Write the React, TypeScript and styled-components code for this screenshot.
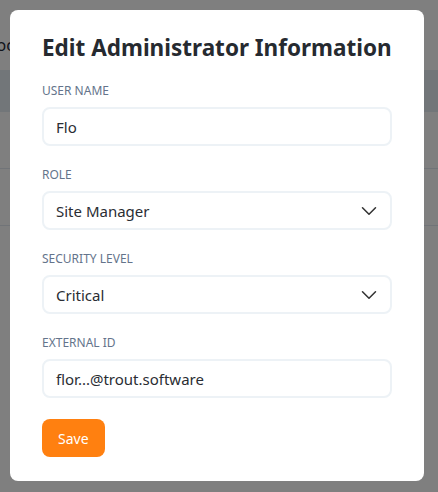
import { ReactElement } from "react";
import styled, { createGlobalStyle } from "styled-components";
import { ChevronDown } from "lucide-react";

const GlobalStyle = createGlobalStyle`
  html, body {
    margin: 0;
    padding: 0;
    background: #ffffff;
    font-family: "Noto Sans", "Open Sans", sans-serif;
  }
  * {
    box-sizing: border-box;
  }
`;

const Page = styled.div`
  position: relative;
  width: 438px;
  height: 492px;
  overflow: hidden;
  background: #ffffff;
`;

const PageTitle = styled.div`
  padding: 34px 0 0 0;
  margin-left: -18px;
  height: 70px;
  font-size: 16px;
  color: #1f2937;
`;

const Band = styled.div`
  height: 42px;
  background: #e5ecf3;
`;

const TableRow = styled.div`
  height: 57px;
  border-bottom: 1px solid #e2e8f0;
`;

const Backdrop = styled.div`
  position: absolute;
  inset: 0;
  background: rgba(0, 0, 0, 0.5);
  padding: 10px 14px 11px 10px;
`;

const Modal = styled.div`
  background: #ffffff;
  border-radius: 8px;
  height: 100%;
  padding: 23px 32px 24px 32px;
  display: flex;
  flex-direction: column;
`;

const Title = styled.h2`
  margin: 0 0 20px 0;
  font-size: 22.5px;
  line-height: 30px;
  font-weight: 700;
  color: #262a30;
  white-space: nowrap;
`;

const Field = styled.div`
  display: flex;
  flex-direction: column;
  gap: 8px;
  margin-bottom: 21px;
`;

const Label = styled.label`
  font-size: 12px;
  line-height: 16px;
  color: #64748b;
  text-transform: uppercase;
`;

const InputBox = styled.div`
  height: 39px;
  border: 2px solid #edf2f6;
  border-radius: 8px;
  padding: 0 8px 0 12px;
  display: flex;
  align-items: center;
  justify-content: space-between;
  font-size: 15px;
  color: #2a2d33;
`;

const SaveButton = styled.button`
  align-self: flex-start;
  height: 39px;
  padding: 0 16px;
  border: none;
  border-radius: 8px;
  background: #ff8010;
  color: #ffffff;
  font-family: inherit;
  font-size: 14px;
`;

type FieldProps = { label: string; value: string; select?: boolean };

const FormField = ({ label, value, select }: FieldProps): ReactElement => (
  <Field>
    <Label>{label}</Label>
    <InputBox>
      <span>{value}</span>
      {select && <ChevronDown size={26} strokeWidth={1.4} color="#333" />}
    </InputBox>
  </Field>
);

export default function App(): ReactElement {
  return (
    <>
      <GlobalStyle />
      <Page>
        <PageTitle>Block</PageTitle>
        <Band />
        <TableRow />
        <TableRow />
        <Backdrop>
          <Modal>
            <Title>Edit Administrator Information</Title>
            <FormField label="User name" value="Flo" />
            <FormField label="Role" value="Site Manager" select />
            <FormField label="Security level" value="Critical" select />
            <FormField label="External ID" value="flor...@trout.software" />
            <SaveButton>Save</SaveButton>
          </Modal>
        </Backdrop>
      </Page>
    </>
  );
}
